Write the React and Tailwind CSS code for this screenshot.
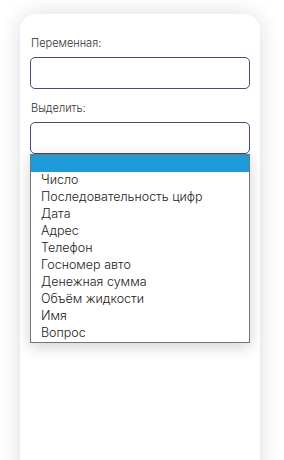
import React from "react";

const options = [
  "",
  "Число",
  "Последовательность цифр",
  "Дата",
  "Адрес",
  "Телефон",
  "Госномер авто",
  "Денежная сумма",
  "Объём жидкости",
  "Имя",
  "Вопрос",
];

const App = () => {
  return (
    <div
      className="w-full h-[460px] overflow-hidden bg-white pt-[14px] px-[20px]"
      style={{ fontFamily: "Inter, 'Noto Sans', Arial, sans-serif" }}
    >
      <div className="w-[240px] h-[480px] bg-white rounded-2xl shadow-[0_0_22px_rgba(0,0,0,0.14)] pt-[22px] px-[10px]">
        <p className="text-[11px] leading-[14px] text-[#333] font-light pl-px">Переменная:</p>
        <div className="mt-[7px] h-[32px] w-full border border-[#4a4a78] rounded-[5px]" />

        <p className="mt-[12px] text-[11px] leading-[14px] text-[#333] font-light pl-px">Выделить:</p>
        <div className="relative mt-[7px]">
          <div className="h-[32px] w-full border border-[#4a4a78] rounded-[5px]" />
          <ul className="absolute left-0 top-[32px] w-full bg-white border border-[#767676] shadow-[0_4px_14px_rgba(0,0,0,0.18)] z-10">
            {options.map((o, i) => (
              <li
                key={i}
                className={
                  i === 0
                    ? "h-[17px] bg-[#1e9cd9] text-white text-[12.5px] leading-[15px] font-light pl-[10px]"
                    : "h-[17px] text-[#222] text-[12.5px] leading-[15px] font-light pl-[10px]"
                }
              >
                {o}
              </li>
            ))}
          </ul>
        </div>
      </div>
    </div>
  );
};

export default App;
